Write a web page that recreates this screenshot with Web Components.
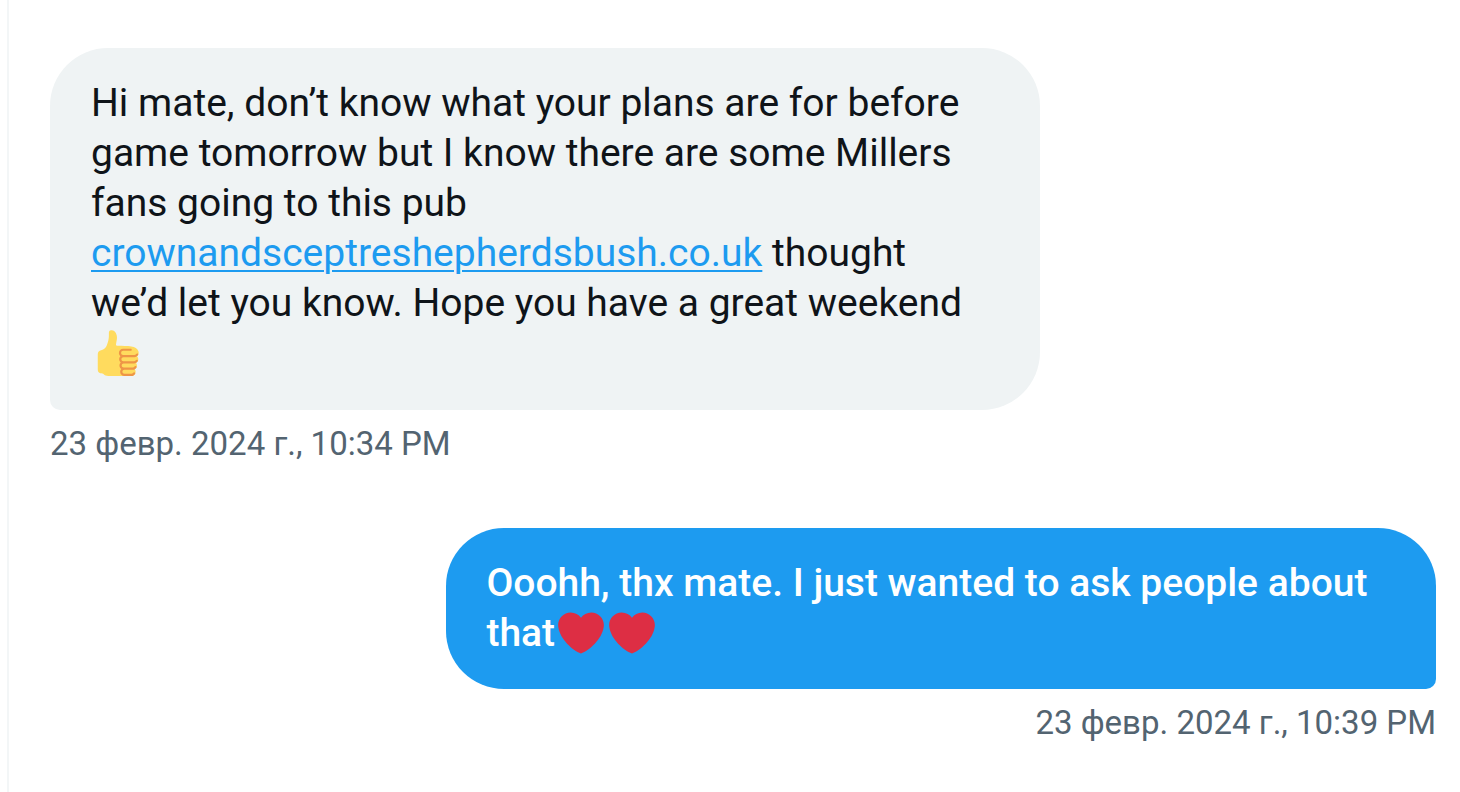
<!DOCTYPE html>
<html lang="en">
<head>
<meta charset="utf-8">
<title>Messages</title>
<style>
  body { margin: 0; background: #fff; font-family: Roboto, "Liberation Sans", sans-serif; }
</style>
</head>
<body>

<dm-conversation>
  <dm-message stamp="23 февр. 2024 г., 10:34 PM" datetime="2024-02-23T22:34">Hi mate, don’t know what your plans are for before game tomorrow but I know there are some Millers fans going to this pub <a href="https://crownandsceptreshepherdsbush.co.uk">crownandsceptreshepherdsbush.co.uk</a> thought we’d let you know. Hope you have a great weekend <dm-emoji name="thumb"></dm-emoji></dm-message>
  <dm-message own stamp="23 февр. 2024 г., 10:39 PM" datetime="2024-02-23T22:39">Ooohh, thx mate. I just wanted to ask people about that<dm-emoji name="heart"></dm-emoji><dm-emoji name="heart"></dm-emoji></dm-message>
</dm-conversation>

<template id="conversation">
  <style>
    :host {
      display: flex;
      flex-direction: column;
      gap: 64px;
      box-sizing: border-box;
      min-height: 100vh;
      margin-left: 7px;
      padding: 48px 24px 36px 41px;
      border-left: 2px solid #f3f6f7;
    }
  </style>
  <slot></slot>
</template>

<template id="message">
  <style>
    :host {
      display: flex;
      flex-direction: column;
      align-items: flex-start;
      gap: 14px;
    }
    :host([own]) { align-items: flex-end; }
    .bubble {
      box-sizing: border-box;
      width: fit-content;
      max-width: 71.4%;
      padding: 30px 56px 32px 41px;
      border-radius: 58px 58px 58px 10px;
      background: #eff3f4;
      color: #0f1419;
      font-size: 39px;
      line-height: 50px;
      overflow-wrap: break-word;
    }
    :host([own]) .bubble {
      padding: 30px 56px 31px 40px;
      border-radius: 58px 58px 10px 58px;
      background: #1d9bf0;
      color: #fff;
      font-weight: 500;
    }
    ::slotted(a) {
      color: #1d9bf0;
      text-decoration: underline;
      text-decoration-thickness: 2px;
      text-underline-offset: 4px;
    }
    time {
      color: #536471;
      font-size: 33px;
      line-height: 40px;
    }
  </style>
  <div class="bubble"><slot></slot></div>
  <time></time>
</template>

<template id="emoji">
  <style>
    :host {
      display: inline-block;
      width: 46px;
      height: 46px;
      margin: 0 2px 0 3px;
      vertical-align: -10px;
    }
    svg { display: block; width: 100%; height: 100%; }
  </style>
</template>

<script>
  const stamp = (id, host) => {
    const root = host.attachShadow({ mode: 'open' });
    root.append(document.getElementById(id).content.cloneNode(true));
    return root;
  };

  const EMOJI = {
    heart: ['Red heart', '<path fill="#DD2E44" d="M35.885 11.833c0-5.45-4.418-9.868-9.867-9.868-3.308 0-6.227 1.633-8.018 4.129-1.791-2.496-4.71-4.129-8.017-4.129-5.45 0-9.868 4.417-9.868 9.868 0 .772.098 1.52.266 2.241C1.751 22.587 11.216 31.568 18 34.034c6.783-2.466 16.249-11.447 17.617-19.959.17-.721.268-1.469.268-2.242z"/>'],
    thumb: ['Thumbs up', '<path fill="#FFDB5E" d="M34.956 17.916c0-.503-.12-.975-.321-1.404-1.341-4.326-7.619-4.01-16.549-4.221-1.493-.035-.639-1.798-.115-5.668.341-2.517-1.282-6.382-4.01-6.382-4.498 0-.171 3.548-4.148 12.322-2.125 4.688-6.875 2.062-6.875 6.771v10.719c0 1.833.18 3.595 2.758 3.885C8.195 34.219 7.633 36 11.238 36h18.044c1.838 0 3.333-1.496 3.333-3.334 0-.762-.267-1.456-.698-2.018 1.02-.571 1.72-1.649 1.72-2.899 0-.76-.266-1.454-.696-2.015 1.023-.57 1.725-1.649 1.725-2.901 0-.909-.368-1.733-.961-2.336.757-.611 1.251-1.535 1.251-2.581z"/><path fill="#EE9547" d="M23.02 21.249h8.604c1.17 0 2.268-.626 2.866-1.633.246-.415.109-.952-.307-1.199-.415-.247-.952-.108-1.199.307-.283.479-.806.775-1.361.775h-8.81c-.873 0-1.583-.71-1.583-1.583s.71-1.583 1.583-1.583H28.7c.483 0 .875-.392.875-.875s-.392-.875-.875-.875h-5.888c-1.838 0-3.333 1.495-3.333 3.333 0 1.025.475 1.932 1.205 2.544-.615.605-.998 1.445-.998 2.373 0 1.028.478 1.938 1.212 2.549-.611.604-.99 1.441-.99 2.367 0 1.12.559 2.108 1.409 2.713-.524.589-.852 1.356-.852 2.204 0 1.838 1.495 3.333 3.333 3.333h5.484c1.17 0 2.269-.625 2.867-1.632.247-.415.11-.952-.305-1.199-.416-.245-.953-.11-1.199.305-.285.479-.808.776-1.363.776h-5.484c-.873 0-1.583-.71-1.583-1.583s.71-1.583 1.583-1.583h6.506c1.17 0 2.27-.626 2.867-1.633.247-.416.11-.953-.305-1.199-.419-.251-.954-.11-1.199.305-.289.487-.799.777-1.363.777h-7.063c-.873 0-1.583-.711-1.583-1.584s.71-1.583 1.583-1.583h8.091c1.17 0 2.269-.625 2.867-1.632.247-.415.11-.952-.305-1.199-.417-.246-.953-.11-1.199.305-.289.486-.799.776-1.363.776H23.02c-.873 0-1.583-.71-1.583-1.583s.71-1.584 1.583-1.584z"/>']
  };

  customElements.define('dm-conversation', class extends HTMLElement {
    constructor() { super(); stamp('conversation', this); }
  });

  customElements.define('dm-message', class extends HTMLElement {
    connectedCallback() {
      if (this.shadowRoot) return;
      const time = stamp('message', this).querySelector('time');
      time.textContent = this.getAttribute('stamp');
      time.dateTime = this.getAttribute('datetime');
    }
  });

  customElements.define('dm-emoji', class extends HTMLElement {
    connectedCallback() {
      if (this.shadowRoot) return;
      const [label, paths] = EMOJI[this.getAttribute('name')];
      stamp('emoji', this).querySelector('style')
        .insertAdjacentHTML('afterend', `<svg viewBox="0 0 36 36" role="img" aria-label="${label}">${paths}</svg>`);
    }
  });
</script>
</body>
</html>
